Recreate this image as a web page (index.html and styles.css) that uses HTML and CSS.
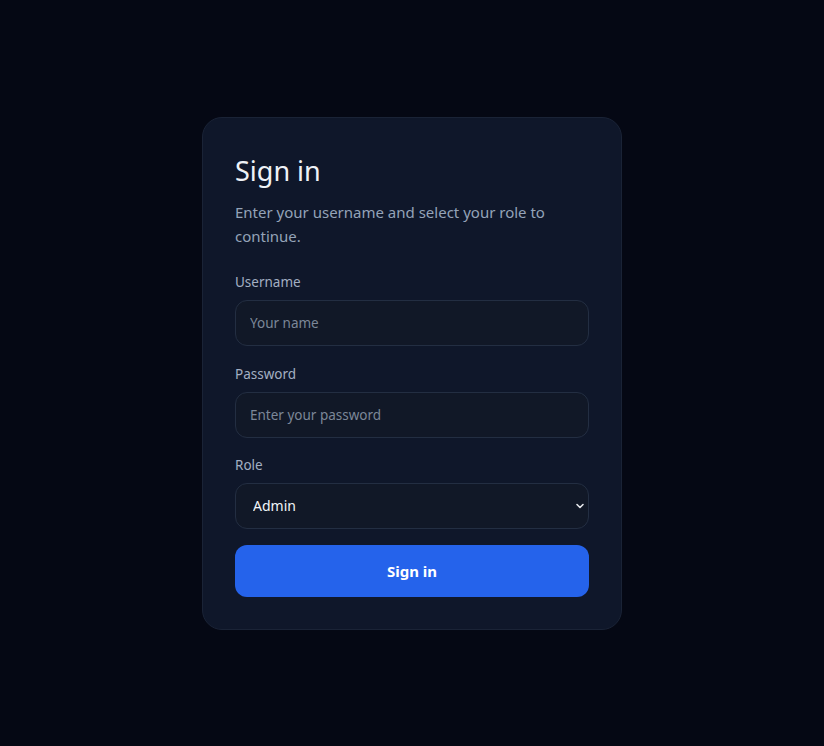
FILE: index.html
```html
<!DOCTYPE html>
<html lang="en">
<head>
<meta charset="utf-8">
<title>Sign in</title>
<link rel="stylesheet" href="styles.css">
</head>
<body>
<main class="page">
  <form class="card">
    <h1 class="title">Sign in</h1>
    <p class="subtitle">Enter your username and select your role to continue.</p>
    <div class="field field-first">
      <label class="label" for="username">Username</label>
      <input class="input" id="username" type="text" placeholder="Your name">
    </div>
    <div class="field">
      <label class="label" for="password">Password</label>
      <input class="input" id="password" type="password" placeholder="Enter your password">
    </div>
    <div class="field field-last">
      <label class="label" for="role">Role</label>
      <div class="select-wrap">
        <select class="input select" id="role">
          <option>Admin</option>
          <option>Editor</option>
          <option>Viewer</option>
        </select>
        <svg class="chevron" width="10" height="10" viewBox="0 0 10 10" aria-hidden="true"><path d="M2 3.5 L5 6.5 L8 3.5" fill="none" stroke="#e5e7eb" stroke-width="1.6" stroke-linecap="round" stroke-linejoin="round"/></svg>
      </div>
    </div>
    <button class="button" type="button">Sign in</button>
  </form>
</main>
</body>
</html>
```
FILE: styles.css
```css
* { box-sizing: border-box; }
html, body { margin: 0; height: 100%; }
body {
  background: #050814;
  font-family: "Noto Sans", "Open Sans", sans-serif;
  color: #e5e7eb;
}
.page {
  min-height: 100vh;
  display: flex;
  align-items: center;
  justify-content: center;
}
.card {
  width: 420px;
  background: #0f172a;
  border: 1px solid #1a2336;
  border-radius: 20px;
  padding: 32px;
  display: flex;
  flex-direction: column;
}
.title {
  margin: 0;
  padding-top: 4px;
  font-size: 27px;
  font-weight: 400;
  line-height: 34px;
  color: #eef2f7;
}
.subtitle {
  margin: 12px 0 24px;
  font-size: 15px;
  line-height: 24px;
  color: #94a3b8;
}
.field {
  display: flex;
  flex-direction: column;
  gap: 8px;
  margin-bottom: 17px;
}
.field-first { margin-bottom: 18px; }
.field-last { margin-bottom: 16px; }
.label {
  font-size: 13.5px;
  line-height: 20px;
  color: #a3afc2;
}
.input {
  height: 46px;
  width: 100%;
  background: #111827;
  border: 1px solid #232e42;
  border-radius: 12px;
  padding: 0 14px;
  font-family: inherit;
  font-size: 13.5px;
  color: #f1f5f9;
  outline: none;
}
.input::placeholder { color: #7c8798; }
.select-wrap { position: relative; }
.select {
  appearance: none;
  -webkit-appearance: none;
  padding-left: 17px;
  font-size: 14px;
}
.chevron {
  position: absolute;
  right: 4px;
  top: 18px;
  pointer-events: none;
}
.button {
  height: 52px;
  border: none;
  border-radius: 12px;
  background: #2563eb;
  color: #ffffff;
  font-family: inherit;
  font-size: 15px;
  font-weight: 700;
  cursor: pointer;
}
```
